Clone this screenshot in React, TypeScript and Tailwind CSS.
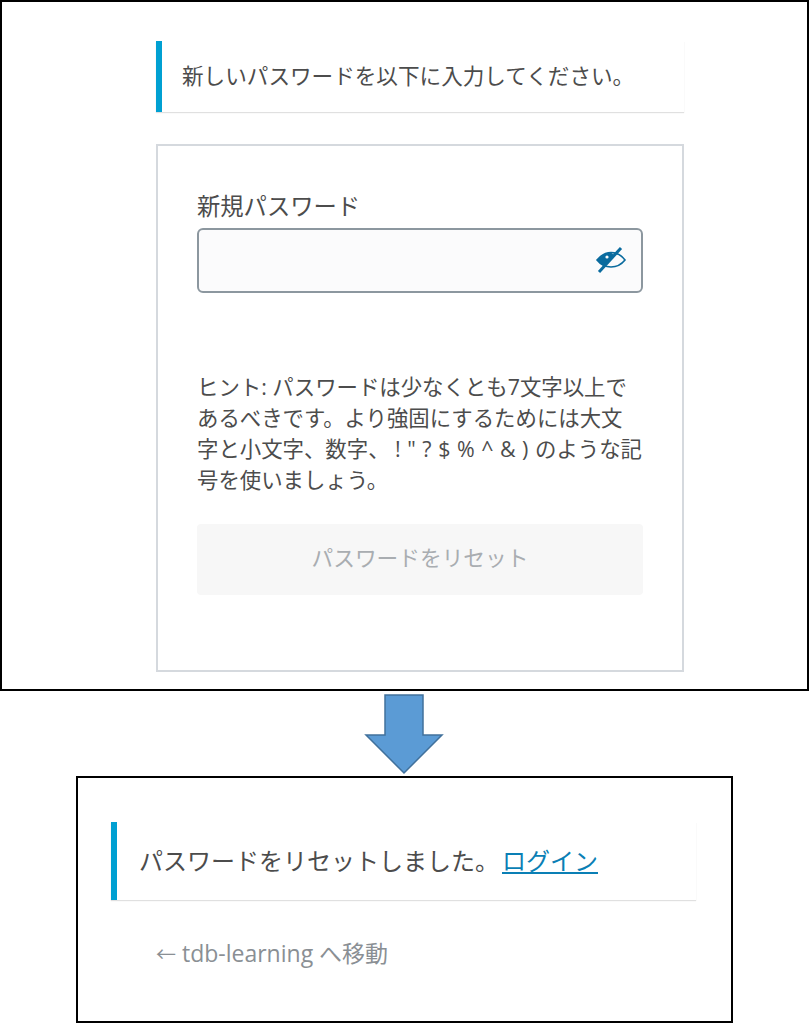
import React from "react";

const jp = "font-['Open_Sans','Noto_Sans_CJK_JP',sans-serif]";

const EyeOff = () => (
  <svg width="32" height="28" viewBox="0 0 32 28" fill="none" className="text-[#0a6b9e] mb-[2px] mr-[1px]">
    <path d="M2 14 C7 8 11 6.5 16 6.5 C21 6.5 26 8.5 30 14 C26 19 21 21 16 21 C11 21 6 19 2 14 Z" stroke="currentColor" strokeWidth="1.6" />
    <path d="M2 14 C7 9 11 6.5 16 6.5 L20 10 L9 20 C7 19 5 17 2 14 Z" fill="currentColor" />
    <path d="M4 26 L26 2" stroke="currentColor" strokeWidth="3" />
    <circle cx="12" cy="11" r="1.6" fill="#fbfbfc" />
  </svg>
);

const ArrowDown = () => (
  <svg width="80" height="81" viewBox="0 0 80 81" className="ml-[364px] mt-[3px] block">
    <path d="M21 1 H59 V41 H78 L40 79 L2 41 H21 Z" fill="#5b9bd5" stroke="#41719c" strokeWidth="1.5" />
  </svg>
);

export default function App() {
  return (
    <div className={`w-[809px] h-[1024px] bg-white overflow-hidden text-[#4c4c4c] ${jp}`}>
      <section className="h-[691px] border-2 border-black pl-[154px] pt-[39px]">
        <div className="w-[528px] h-[71px] border-l-[6px] border-[#00a0d2] bg-white shadow-[0_1px_1px_rgba(0,0,0,0.12)] pl-[20px] flex items-center text-[21.6px]">
          新しいパスワードを以下に入力してください。
        </div>
        <div className="w-[528px] h-[528px] mt-[32px] border-2 border-[#d5d9de] bg-white px-[39px] pt-[42px]">
          <label className="block text-[23.3px] leading-[36px]">新規パスワード</label>
          <div className="h-[65px] mt-[4px] border-2 border-[#8c979f] rounded-[6px] bg-[#fbfbfc] flex items-center justify-end pr-[13px]">
            <EyeOff />
          </div>
          <p className="mt-[78px] text-[21.4px] leading-[31px] whitespace-nowrap">
            ヒント: パスワードは少なくとも7文字以上で
            <br />
            あるべきです。より強固にするためには大文
            <br />
            字と小文字、数字、 <span className="[word-spacing:1px]">! " ? $ % ^ &amp; ) </span>のような記
            <br />
            号を使いましょう。
          </p>
          <button className="mt-[29px] w-full h-[71px] pb-[3px] rounded-[4px] bg-[#f7f7f7] text-[#a9adb1] text-[21.7px]">
            パスワードをリセット
          </button>
        </div>
      </section>
      <ArrowDown />
      <section className="ml-[76px] mt-[1px] w-[657px] h-[247px] border-2 border-black pl-[33px] pt-[44px]">
        <div className="w-[585px] h-[78px] border-l-[6px] border-[#00a0d2] bg-white shadow-[0_1px_1px_rgba(0,0,0,0.12)] pl-[22px] flex items-center text-[24px]">
          パスワードをリセットしました。
          <a href="#" className="text-[#0a7fb5] underline ml-[3px]">ログイン</a>
        </div>
        <a href="#" className="block ml-[45px] mt-[33px] text-[23px] leading-[40px] text-[#8a8f94]">
          <span className="text-[20px]">←</span> tdb-learning へ移動
        </a>
      </section>
    </div>
  );
}
